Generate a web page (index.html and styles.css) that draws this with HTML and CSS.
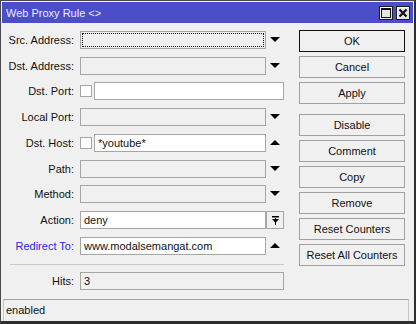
FILE: index.html
```html
<!DOCTYPE html>
<html lang="en">
<head>
    <meta charset="UTF-8">
    <meta name="viewport" content="width=device-width, initial-scale=1.0">
    <title>Web Proxy Rule</title>
    <link rel="stylesheet" href="styles.css">
</head>
<body>
    <div class="window">
        <div class="titlebar">
            <span class="title">Web Proxy Rule &lt;&gt;</span>
            <div class="title-buttons">
                <span class="tbtn">
                    <svg width="12" height="12" viewBox="0 0 12 12"><rect x="1.5" y="1.5" width="9" height="9" fill="none" stroke="#111" stroke-width="1"/><rect x="1" y="1" width="10" height="2" fill="#111"/></svg>
                </span>
                <span class="tbtn">
                    <svg width="12" height="12" viewBox="0 0 12 12"><path d="M2.5 2.5 L9.5 9.5 M9.5 2.5 L2.5 9.5" stroke="#111" stroke-width="2.2"/></svg>
                </span>
            </div>
        </div>

        <div class="main">
            <div class="form">
                <div class="row">
                    <label class="lbl">Src. Address:</label>
                    <div class="field off short"><span class="focus"></span></div>
                    <span class="arrow"><svg width="10" height="6" viewBox="0 0 10 6"><path d="M0 0 H10 L5 5 Z" fill="#000"/></svg></span>
                </div>
                <div class="row">
                    <label class="lbl">Dst. Address:</label>
                    <div class="field off short"></div>
                    <span class="arrow"><svg width="10" height="6" viewBox="0 0 10 6"><path d="M0 0 H10 L5 5 Z" fill="#000"/></svg></span>
                </div>
                <div class="row">
                    <label class="lbl">Dst. Port:</label>
                    <span class="check"></span>
                    <div class="field on wide-chk"></div>
                </div>
                <div class="row">
                    <label class="lbl">Local Port:</label>
                    <div class="field off short"></div>
                    <span class="arrow"><svg width="10" height="6" viewBox="0 0 10 6"><path d="M0 0 H10 L5 5 Z" fill="#000"/></svg></span>
                </div>
                <div class="row">
                    <label class="lbl">Dst. Host:</label>
                    <span class="check"></span>
                    <div class="field on short-chk">*youtube*</div>
                    <span class="arrow"><svg width="10" height="6" viewBox="0 0 10 6"><path d="M0 5 H10 L5 0 Z" fill="#000"/></svg></span>
                </div>
                <div class="row">
                    <label class="lbl">Path:</label>
                    <div class="field off short"></div>
                    <span class="arrow"><svg width="10" height="6" viewBox="0 0 10 6"><path d="M0 0 H10 L5 5 Z" fill="#000"/></svg></span>
                </div>
                <div class="row">
                    <label class="lbl">Method:</label>
                    <div class="field off short"></div>
                    <span class="arrow"><svg width="10" height="6" viewBox="0 0 10 6"><path d="M0 0 H10 L5 5 Z" fill="#000"/></svg></span>
                </div>
                <div class="row">
                    <label class="lbl">Action:</label>
                    <div class="field on short">deny</div>
                    <span class="drop-btn">
                        <svg width="9" height="9" viewBox="0 0 9 9"><rect x="1" y="0" width="7" height="1.5" fill="#000"/><path d="M1 3 H8 L4.5 7 Z" fill="#000"/><rect x="4" y="2" width="1" height="7" fill="#000"/></svg>
                    </span>
                </div>
                <div class="row">
                    <label class="lbl blue">Redirect To:</label>
                    <div class="field on short">www.modalsemangat.com</div>
                    <span class="arrow"><svg width="10" height="6" viewBox="0 0 10 6"><path d="M0 5 H10 L5 0 Z" fill="#000"/></svg></span>
                </div>

                <div class="separator"></div>

                <div class="row">
                    <label class="lbl">Hits:</label>
                    <div class="field off wide">3</div>
                </div>
            </div>

            <div class="buttons">
                <button class="btn default">OK</button>
                <button class="btn">Cancel</button>
                <button class="btn">Apply</button>
                <button class="btn spaced">Disable</button>
                <button class="btn">Comment</button>
                <button class="btn">Copy</button>
                <button class="btn">Remove</button>
                <button class="btn">Reset Counters</button>
                <button class="btn">Reset All Counters</button>
            </div>
        </div>

        <div class="status">enabled</div>
    </div>
</body>
</html>
```

FILE: styles.css
```css
body {
    margin: 0;
    font-family: "Liberation Sans", Arial, sans-serif;
    font-size: 11px;
    color: #111;
}
.window {
    width: 416px;
    height: 324px;
    box-sizing: border-box;
    border-style: solid;
    border-color: #4a4a4a #2e2e2e #2e2e2e #4a4a4a;
    border-width: 1px 2px 3px 1px;
    padding: 1px 1px 0 1px;
    background-color: #f0f0f0;
    display: flex;
    flex-direction: column;
}
.titlebar {
    height: 21px;
    flex-shrink: 0;
    background-color: #4b4ec8;
    display: flex;
    align-items: center;
    justify-content: space-between;
    padding: 0 3px 0 4px;
}
.title {
    color: #ecebff;
    font-size: 11px;
    padding-top: 1px;
}
.title-buttons {
    display: flex;
    gap: 3px;
    padding-top: 1px;
}
.tbtn {
    width: 14px;
    height: 14px;
    box-sizing: border-box;
    border: 1px solid #1c1c1c;
    background-color: #e4e4e4;
    box-shadow: inset 1px 1px 0 #ffffff;
    display: flex;
    align-items: center;
    justify-content: center;
}
.tbtn svg {
    display: block;
}

.main {
    display: flex;
    flex: 1;
}
.form {
    width: 282px;
    padding-top: 4px;
    display: flex;
    flex-direction: column;
}
.row {
    height: 25.75px;
    display: flex;
    align-items: center;
}
.lbl {
    width: 72px;
    margin-right: 6px;
    text-align: right;
    white-space: nowrap;
}
.lbl.blue {
    color: #2626e0;
}
.field {
    height: 18px;
    box-sizing: border-box;
    border: 1px solid #a5a5a5;
    padding: 0 3px;
    line-height: 16px;
    white-space: nowrap;
    overflow: hidden;
    position: relative;
}
.field.on {
    background-color: #fff;
}
.field.off {
    background-color: #f0f0f0;
}
.field.short {
    width: 186px;
}
.field.wide {
    width: 204px;
}
.field.short-chk {
    width: 172px;
}
.field.wide-chk {
    width: 190px;
}
.focus {
    position: absolute;
    left: 1px;
    top: 1px;
    right: 1px;
    bottom: 1px;
    border: 1px dotted #111;
}
.check {
    width: 12px;
    height: 12px;
    box-sizing: border-box;
    border: 1px solid #a5a5a5;
    background-color: #fff;
    margin-right: 2px;
}
.arrow {
    width: 18px;
    display: flex;
    justify-content: center;
}
.arrow svg {
    display: block;
}
.drop-btn {
    width: 18px;
    height: 18px;
    box-sizing: border-box;
    border: 1px solid #a5a5a5;
    background-color: #f0f0f0;
    display: flex;
    align-items: center;
    justify-content: center;
}
.separator {
    height: 1px;
    background-color: #c9c9c9;
    margin: 5px 0 3px 8px;
    width: 274px;
}

.buttons {
    margin-left: 15px;
    padding-top: 7px;
    display: flex;
    flex-direction: column;
    gap: 4px;
}
.btn {
    width: 106px;
    height: 22px;
    box-sizing: border-box;
    border: 1px solid #a0a0a0;
    background-color: #f0f0f0;
    font-family: "Liberation Sans", Arial, sans-serif;
    font-size: 11px;
    color: #111;
    padding: 0;
}
.btn.default {
    border-color: #111;
}
.btn.spaced {
    margin-top: 6px;
}

.status {
    height: 22px;
    box-sizing: border-box;
    margin: 0 4px 0 1px;
    border: 1px solid #c6c6c6;
    border-top-color: #a0a0a0;
    border-bottom: none;
    padding: 0 2px;
    line-height: 20px;
    color: #111;
}
```
